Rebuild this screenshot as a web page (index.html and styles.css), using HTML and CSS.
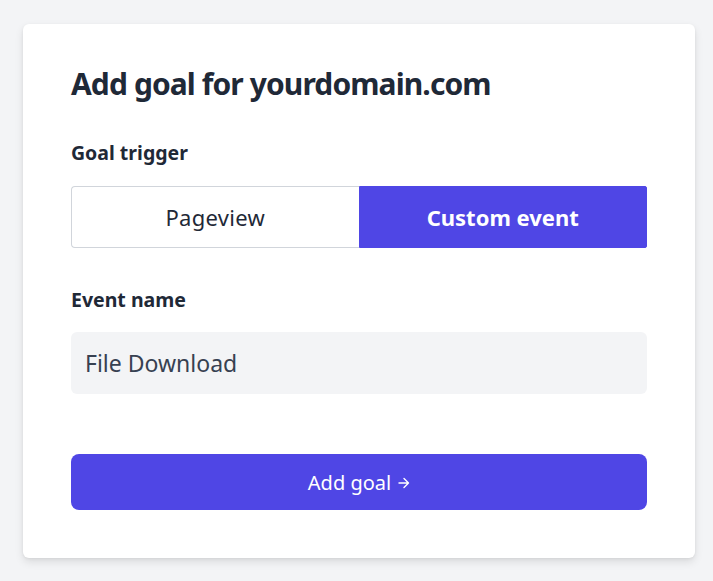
FILE: index.html
```html
<!DOCTYPE html>
<html lang="en">
<head>
<meta charset="utf-8">
<title>Add goal</title>
<link rel="stylesheet" href="styles.css">
</head>
<body>
<main class="page">
  <section class="card">
    <h1 class="title">Add goal for yourdomain.com</h1>
    <div class="field first">
      <div class="label">Goal trigger</div>
      <div class="toggle">
        <button class="toggle-btn">Pageview</button>
        <button class="toggle-btn active">Custom event</button>
      </div>
    </div>
    <div class="field">
      <div class="label">Event name</div>
      <div class="input">File Download</div>
    </div>
    <button class="submit">Add goal <svg class="arrow" width="12" height="12" viewBox="0 0 12 12" aria-hidden="true"><path d="M1 6h9.5M6 1.5 10.5 6 6 10.5" fill="none" stroke="#fff" stroke-width="1.4" stroke-linecap="round" stroke-linejoin="round"/></svg></button>
  </section>
</main>
</body>
</html>
```
FILE: styles.css
```css
* { box-sizing: border-box; }
html, body { margin: 0; padding: 0; }
body {
  background: #f3f4f6;
  font-family: "Noto Sans", "Open Sans", sans-serif;
  color: #1f2937;
}
.page {
  padding: 24px 18px 24px 23px;
}
.card {
  width: 672px;
  background: #fff;
  border-radius: 6px;
  box-shadow: 0 4px 8px rgba(0,0,0,0.10), 0 1px 3px rgba(0,0,0,0.06);
  padding: 42px 48px 48px 48px;
}
.title {
  margin: 0;
  font-size: 30px;
  line-height: 36px;
  font-weight: 700;
  color: #1f2937;
  letter-spacing: -0.9px;
}
.field { margin-top: 38px; }
.field.first { margin-top: 37px; }
.label {
  font-size: 19.5px;
  font-weight: 700;
  line-height: 28px;
  color: #1f2937;
}
.toggle {
  display: flex;
  margin-top: 19px;
  height: 62px;
}
.toggle-btn {
  flex: 1;
  font-family: inherit;
  font-size: 22px;
  color: #1f2937;
  background: #fff;
  border: 1px solid #d1d5db;
  margin: 0;
}
.toggle-btn:first-child { border-radius: 4px 0 0 4px; border-right: none; letter-spacing: 0.3px; }
.toggle-btn.active {
  background: #4f46e5;
  border-color: #4f46e5;
  color: #fff;
  font-weight: 700;
  border-radius: 0 2px 2px 0;
}
.input {
  margin-top: 18px;
  height: 62px;
  background: #f3f4f6;
  border-radius: 6px;
  padding: 0 14px;
  display: flex;
  align-items: center;
  font-size: 23px;
  color: #374151;
}
.submit {
  display: flex;
  align-items: center;
  justify-content: center;
  gap: 7px;
  width: 100%;
  margin-top: 60px;
  height: 56px;
  background: #4f46e5;
  color: #fff;
  border: none;
  border-radius: 8px;
  font-family: inherit;
  font-size: 20px;
  font-weight: 400;
}
.arrow { margin-top: 2px; }
```
